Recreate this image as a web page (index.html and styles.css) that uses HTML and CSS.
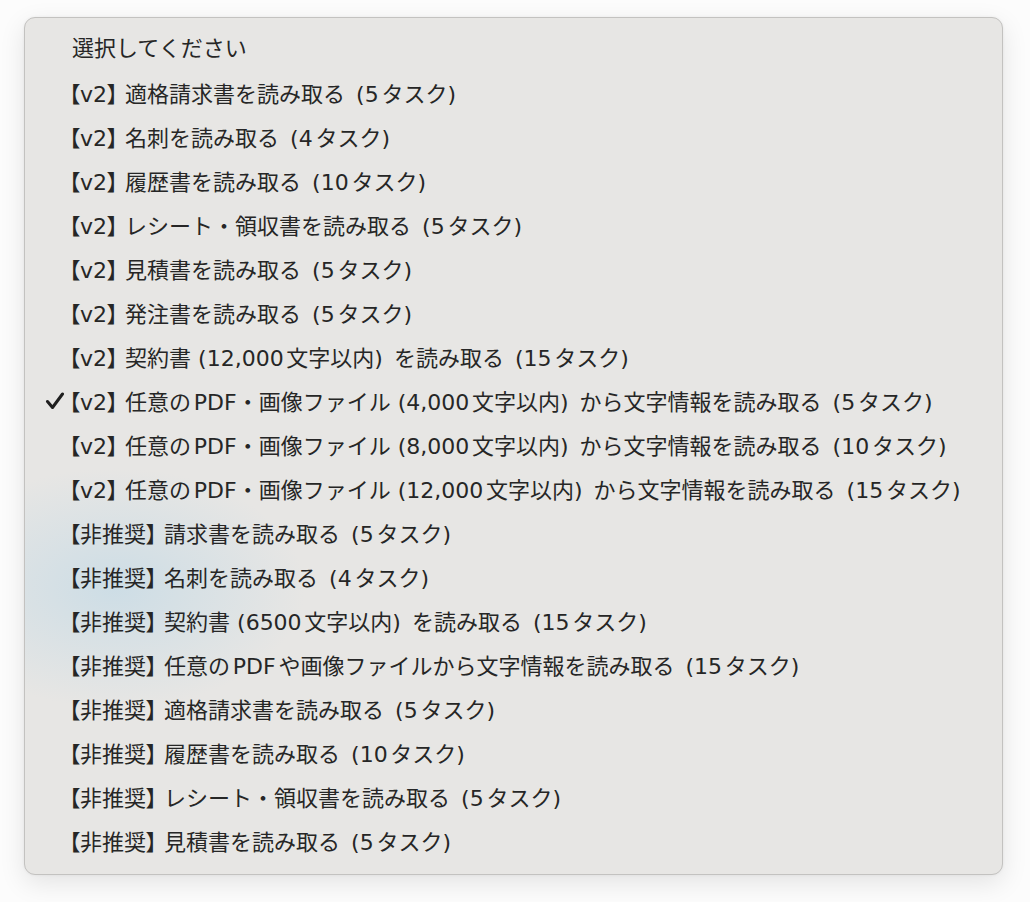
FILE: index.html
```html
<!DOCTYPE html>
<html lang="ja">
<head>
<meta charset="utf-8">
<title>選択してください</title>
<link rel="stylesheet" href="styles.css">
</head>
<body>
<div class="menu">
  <div class="item first"><span class="check"></span><span class="label">選択してください</span></div>
  <div class="item"><span class="check"></span><span class="label"><span class="br">【</span>v2<span class="br">】</span> 適格請求書を読み取る <span class="cnt">(5タスク)</span></span></div>
  <div class="item"><span class="check"></span><span class="label"><span class="br">【</span>v2<span class="br">】</span> 名刺を読み取る <span class="cnt">(4タスク)</span></span></div>
  <div class="item"><span class="check"></span><span class="label"><span class="br">【</span>v2<span class="br">】</span> 履歴書を読み取る <span class="cnt">(10タスク)</span></span></div>
  <div class="item"><span class="check"></span><span class="label"><span class="br">【</span>v2<span class="br">】</span> レシート・領収書を読み取る <span class="cnt">(5タスク)</span></span></div>
  <div class="item"><span class="check"></span><span class="label"><span class="br">【</span>v2<span class="br">】</span> 見積書を読み取る <span class="cnt">(5タスク)</span></span></div>
  <div class="item"><span class="check"></span><span class="label"><span class="br">【</span>v2<span class="br">】</span> 発注書を読み取る <span class="cnt">(5タスク)</span></span></div>
  <div class="item"><span class="check"></span><span class="label"><span class="br">【</span>v2<span class="br">】</span> 契約書 <span class="note">(12,000文字以内)</span> を読み取る <span class="cnt">(15タスク)</span></span></div>
  <div class="item selected"><span class="check"><svg viewBox="0 0 20 18" width="20" height="18"><path d="M2.5 9.5 L7.5 15.5 L17.5 2" fill="none" stroke="#1f1f1f" stroke-width="3" stroke-linecap="round" stroke-linejoin="round"/></svg></span><span class="label"><span class="br">【</span>v2<span class="br">】</span> 任意のPDF・画像ファイル <span class="note">(4,000文字以内)</span> から文字情報を読み取る <span class="cnt">(5タスク)</span></span></div>
  <div class="item"><span class="check"></span><span class="label"><span class="br">【</span>v2<span class="br">】</span> 任意のPDF・画像ファイル <span class="note">(8,000文字以内)</span> から文字情報を読み取る <span class="cnt">(10タスク)</span></span></div>
  <div class="item"><span class="check"></span><span class="label"><span class="br">【</span>v2<span class="br">】</span> 任意のPDF・画像ファイル <span class="note">(12,000文字以内)</span> から文字情報を読み取る <span class="cnt">(15タスク)</span></span></div>
  <div class="item"><span class="check"></span><span class="label"><span class="br">【</span>非推奨<span class="br">】</span> 請求書を読み取る <span class="cnt">(5タスク)</span></span></div>
  <div class="item"><span class="check"></span><span class="label"><span class="br">【</span>非推奨<span class="br">】</span> 名刺を読み取る <span class="cnt">(4タスク)</span></span></div>
  <div class="item"><span class="check"></span><span class="label"><span class="br">【</span>非推奨<span class="br">】</span> 契約書 <span class="note">(6500文字以内)</span> を読み取る <span class="cnt">(15タスク)</span></span></div>
  <div class="item"><span class="check"></span><span class="label"><span class="br">【</span>非推奨<span class="br">】</span> 任意のPDFや画像ファイルから文字情報を読み取る <span class="cnt">(15タスク)</span></span></div>
  <div class="item"><span class="check"></span><span class="label"><span class="br">【</span>非推奨<span class="br">】</span> 適格請求書を読み取る <span class="cnt">(5タスク)</span></span></div>
  <div class="item"><span class="check"></span><span class="label"><span class="br">【</span>非推奨<span class="br">】</span> 履歴書を読み取る <span class="cnt">(10タスク)</span></span></div>
  <div class="item"><span class="check"></span><span class="label"><span class="br">【</span>非推奨<span class="br">】</span> レシート・領収書を読み取る <span class="cnt">(5タスク)</span></span></div>
  <div class="item"><span class="check"></span><span class="label"><span class="br">【</span>非推奨<span class="br">】</span> 見積書を読み取る <span class="cnt">(5タスク)</span></span></div>
</div>
</body>
</html>
```
FILE: styles.css
```css
html, body {
  margin: 0;
  padding: 0;
}
body {
  background: #fcfcfc;
  width: 1030px;
  height: 902px;
  overflow: hidden;
  font-family: "DejaVu Sans", "Noto Sans CJK JP", sans-serif;
}
.menu {
  box-sizing: border-box;
  margin: 17px 0 0 24px;
  width: 979px;
  height: 858px;
  padding: 9px 0 10px 0;
  border: 1px solid #c3c2c0;
  border-radius: 11px;
  background-color: #e7e6e4;
  background-image: radial-gradient(ellipse 190px 120px at 90px 570px, rgba(196, 218, 230, 0.75), rgba(196, 218, 230, 0) 100%);
  box-shadow: 0 8px 26px rgba(0, 0, 0, 0.10), 0 0 3px rgba(0, 0, 0, 0.06);
}
.item {
  display: flex;
  align-items: center;
  height: 44px;
  padding-left: 18px;
  color: #262626;
  font-size: 22px;
  line-height: 44px;
  white-space: nowrap;
  text-autospace: normal;
}
.check {
  width: 26px;
  flex: none;
  display: flex;
  align-items: center;
}
.check svg {
  display: block;
  margin-left: 2px;
}
.first .label {
  padding-left: 3px;
}
.br {
  font-family: "Noto Sans CJK JP", sans-serif;
  font-feature-settings: "palt";
}
.cnt {
  margin-left: 4px;
}
.note {
  margin-right: 4px;
}
```
